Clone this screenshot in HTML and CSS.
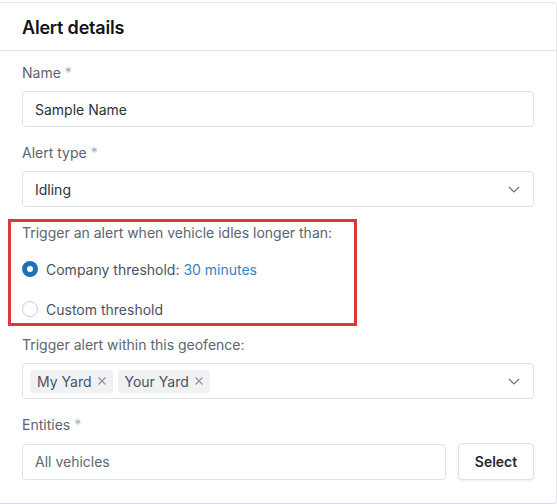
FILE: index.html
```html
<!DOCTYPE html>
<html>
<head>
<meta charset="utf-8">
<link rel="stylesheet" href="styles.css">
</head>
<body>
<div class="card">
  <div class="card-header"><h2 class="title">Alert details</h2></div>
  <div class="card-body">
    <div class="field">
      <label class="label">Name <span class="req">*</span></label>
      <div class="input">Sample Name</div>
    </div>
    <div class="field">
      <label class="label">Alert type <span class="req">*</span></label>
      <div class="input select">
        <span>Idling</span>
        <svg class="chev" width="12" height="7" viewBox="0 0 12 7"><path d="M1 1l5 5 5-5" fill="none" stroke="#6b7280" stroke-width="1.2"/></svg>
      </div>
    </div>
    <div class="highlight">
      <div class="label">Trigger an alert when vehicle idles longer than:</div>
      <div class="radio-row">
        <span class="radio checked"></span>
        <span class="radio-text">Company threshold: <span class="link">30 minutes</span></span>
      </div>
      <div class="radio-row">
        <span class="radio"></span>
        <span class="radio-text">Custom threshold</span>
      </div>
    </div>
    <div class="field geo">
      <label class="label">Trigger alert within this geofence:</label>
      <div class="input select multi">
        <div class="tags">
          <span class="tag">My Yard <svg class="x" width="8" height="8" viewBox="0 0 8 8"><path d="M0.5 0.5l7 7M7.5 0.5l-7 7" stroke="#8a919b" stroke-width="1.1" fill="none"/></svg></span>
          <span class="tag">Your Yard <svg class="x" width="8" height="8" viewBox="0 0 8 8"><path d="M0.5 0.5l7 7M7.5 0.5l-7 7" stroke="#8a919b" stroke-width="1.1" fill="none"/></svg></span>
        </div>
        <svg class="chev" width="12" height="7" viewBox="0 0 12 7"><path d="M1 1l5 5 5-5" fill="none" stroke="#6b7280" stroke-width="1.2"/></svg>
      </div>
    </div>
    <div class="field">
      <label class="label">Entities <span class="req">*</span></label>
      <div class="row">
        <div class="input placeholder grow">All vehicles</div>
        <button class="btn">Select</button>
      </div>
    </div>
  </div>
</div>
</body>
</html>
```
FILE: styles.css
```css
* { box-sizing: border-box; }
html, body { margin: 0; padding: 0; background: #fff; }
body {
  font-family: Inter, "Noto Sans", sans-serif;
  font-size: 14px;
  color: #1f2937;
  padding-top: 2px;
}
.card {
  width: 557px;
  height: 502px;
  border-top: 1px solid #e3e7eb;
  border-right: 1px solid #e3e7eb;
  border-bottom: 1px solid #d9dde2;
  border-top-right-radius: 4px;
  border-bottom-right-radius: 3px;
  background: #fff;
}
.card-header {
  height: 48px;
  border-bottom: 1px solid #dfe4e9;
  padding-left: 22px;
  display: flex;
  align-items: center;
}
.title {
  margin: 0;
  font-size: 18px;
  font-weight: 600;
  color: #111418;
  letter-spacing: -0.2px;
  padding-top: 2px;
}
.card-body {
  padding: 12px 22px 0 22px;
}
.field { margin-bottom: 16px; }
.label {
  display: block;
  line-height: 20px;
  color: #5b6472;
  margin-bottom: 8px;
}
.req { color: #a4abb5; }
.input {
  height: 36px;
  border: 1px solid #dde2e7;
  border-radius: 4px;
  padding: 0 12px;
  display: flex;
  align-items: center;
  color: #2b313a;
  background: #fff;
}
.select { justify-content: space-between; }
.chev { margin-right: 1px; }
.highlight {
  margin: -4px 0 9px -14px;
  width: 349px;
  height: 107px;
  border: 3px solid #d83a3a;
  padding: 1px 0 0 11px;
}
.highlight .label { margin-bottom: 16px; }
.radio-row {
  display: flex;
  align-items: center;
  height: 20px;
  margin-bottom: 20px;
}
.radio {
  width: 16px;
  height: 16px;
  border-radius: 50%;
  border: 1px solid #c9ced5;
  margin-right: 8px;
  flex: none;
}
.radio.checked {
  border: 5px solid #1f72b8;
  background: #fff;
}
.radio-text { color: #4b5360; }
.link { color: #2f86c6; }
.geo .input { padding-left: 7px; }
.tags { display: flex; gap: 5px; }
.tag {
  background: #f0f1f2;
  border-radius: 3px;
  height: 23px;
  padding: 0 7px;
  display: flex;
  align-items: center;
  color: #4b5360;
}
.tag .x { margin-left: 6px; }
.row { display: flex; gap: 12px; align-items: center; }
.grow { flex: 1; }
.placeholder { color: #5f6773; }
.btn {
  width: 76px;
  height: 37px;
  border: 1px solid #dde2e7;
  border-radius: 4px;
  background: #fff;
  font-family: Inter, "Noto Sans", sans-serif;
  font-size: 14px;
  font-weight: 600;
  color: #23272e;
  box-shadow: 0 1px 2px rgba(0,0,0,0.08);
}
```
